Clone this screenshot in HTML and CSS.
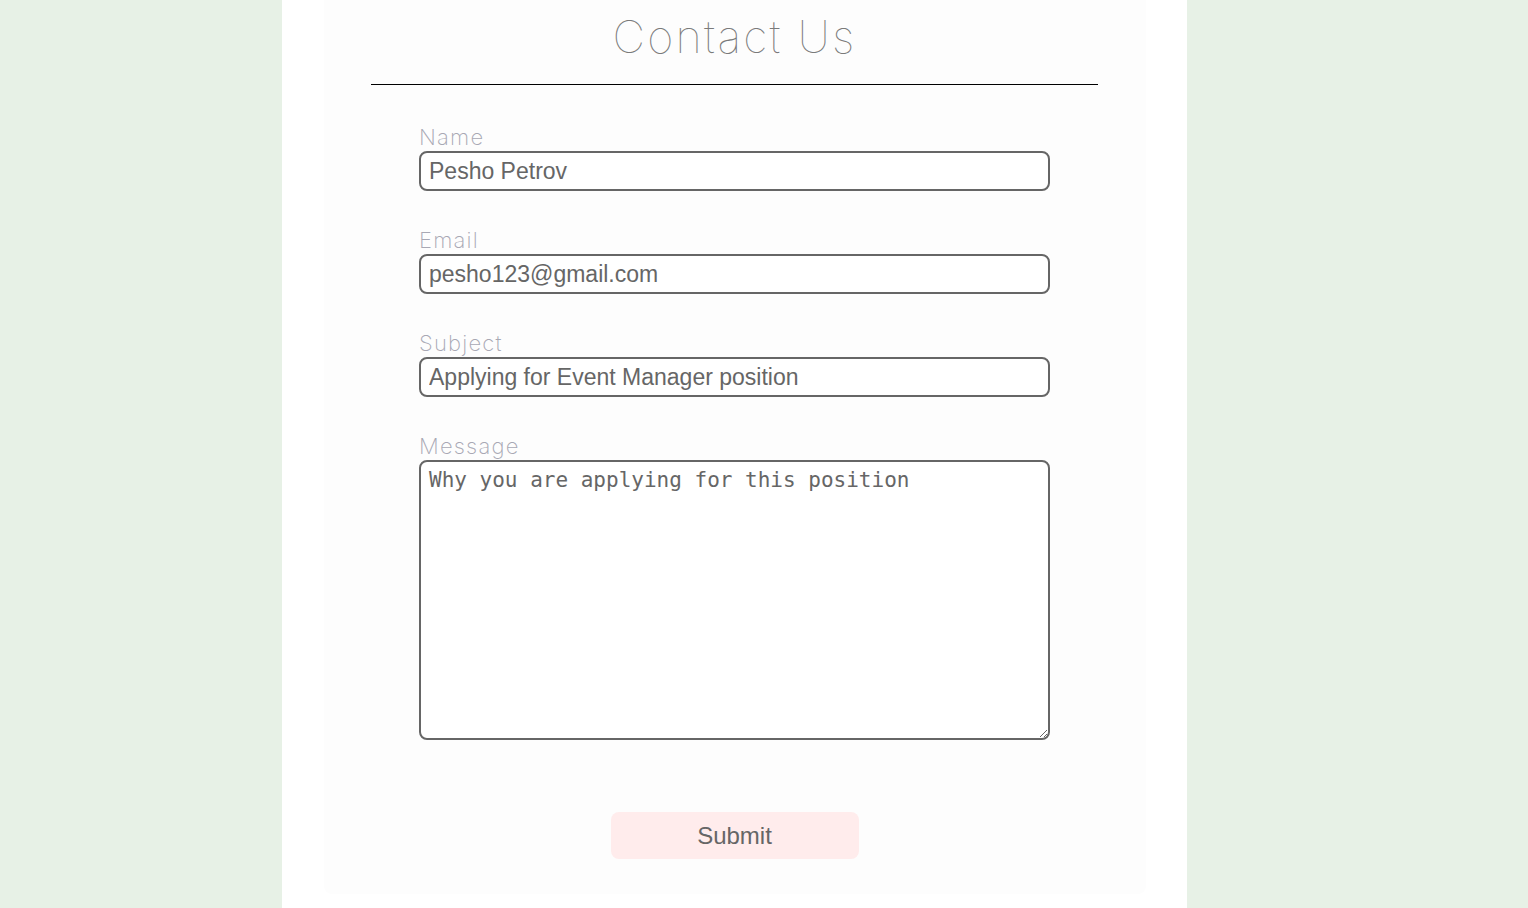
FILE: index.html
```html
<!DOCTYPE html>
<html lang="en">
<head>
<meta charset="utf-8">
<title>Contact Us</title>
<link rel="stylesheet" href="styles.css">
</head>
<body>
<main class="page">
  <section class="card">
    <h1 class="title">Contact Us</h1>
    <hr class="rule">
    <form class="form">
      <div class="field">
        <label class="label" for="name">Name</label>
        <input class="input" id="name" type="text" value="Pesho Petrov">
      </div>
      <div class="field">
        <label class="label" for="email">Email</label>
        <input class="input" id="email" type="email" value="pesho123@gmail.com">
      </div>
      <div class="field">
        <label class="label" for="subject">Subject</label>
        <input class="input" id="subject" type="text" value="Applying for Event Manager position">
      </div>
      <div class="field">
        <label class="label" for="message">Message</label>
        <textarea class="textarea" id="message">Why you are applying for this position</textarea>
      </div>
      <button class="submit" type="button">Submit</button>
    </form>
  </section>
</main>
</body>
</html>
```

FILE: styles.css
```css
html, body {
  margin: 0;
  padding: 0;
}

body {
  background: #e7f1e6;
  font-family: "Liberation Sans", Arial, sans-serif;
}

.page {
  width: 905px;
  min-height: 908px;
  margin: 0 0 0 282px;
  background: #ffffff;
  display: flex;
  justify-content: center;
}

.card {
  width: 822px;
  height: 894px;
  background: #fdfdfd;
  border-radius: 0 0 8px 8px;
  display: flex;
  flex-direction: column;
  align-items: center;
}

.title {
  margin: 10px 0 0;
  font-family: "Inter", "Lato", sans-serif;
  font-weight: 100;
  font-size: 45px;
  line-height: 54px;
  color: #7a7a7a;
  letter-spacing: 2.2px;
}

.rule {
  width: 727px;
  margin: 20px 0 0;
  border: 0;
  border-top: 1px solid #000;
  height: 0;
}

.form {
  display: flex;
  flex-direction: column;
  align-items: center;
  margin-top: 43px;
}

.field {
  width: 631px;
  display: flex;
  flex-direction: column;
  margin-bottom: 40px;
}

.label {
  font-family: "Inter", "Lato", sans-serif;
  font-weight: 200;
  font-size: 22px;
  line-height: 19px;
  padding-bottom: 4px;
  color: #a8a8b4;
  letter-spacing: 1.2px;
}

.input {
  box-sizing: border-box;
  width: 631px;
  height: 40px;
  border: 2px solid #666;
  border-radius: 8px;
  padding: 0 8px;
  font-family: "Liberation Sans", Arial, sans-serif;
  font-size: 23px;
  color: #666;
  background: #fff;
  outline: none;
}

.textarea {
  box-sizing: border-box;
  width: 631px;
  height: 280px;
  border: 2px solid #666;
  border-radius: 8px;
  padding: 6px 8px;
  font-family: "DejaVu Sans Mono", monospace;
  font-size: 21px;
  color: #666;
  background: #fff;
  resize: vertical;
  outline: none;
}

.submit {
  margin-top: 32px;
  width: 248px;
  height: 47px;
  border: 0;
  border-radius: 8px;
  background: #ffecec;
  font-family: "Liberation Sans", Arial, sans-serif;
  font-size: 24px;
  color: #666;
}
```
